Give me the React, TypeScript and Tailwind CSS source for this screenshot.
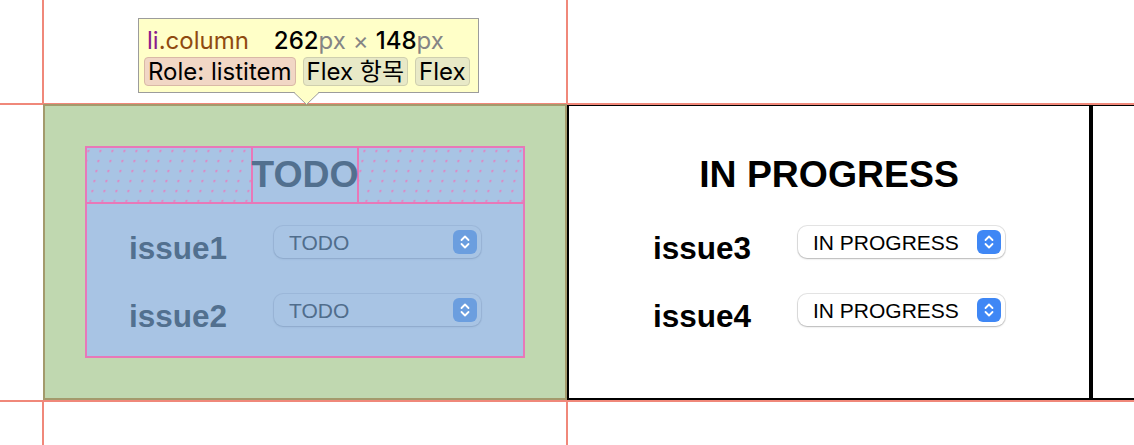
import React from "react";

interface ColumnProps {
  title: string;
  status: string;
  issues: string[];
  highlighted?: boolean;
}

// stepper button of a mac-style select
function Stepper({ bg }: { bg: string }) {
  return (
    <div className={`w-[24px] h-[24px] rounded-[6px] flex items-center justify-center ${bg}`}>
      <svg width="12" height="16" viewBox="0 0 12 16" fill="none" stroke="white" strokeWidth="1.8" strokeLinecap="round" strokeLinejoin="round">
        <path d="M2.5 6 L6 2.5 L9.5 6" />
        <path d="M2.5 10 L6 13.5 L9.5 10" />
      </svg>
    </div>
  );
}

function FakeSelect({ value, highlighted }: { value: string; highlighted?: boolean }) {
  return (
    <div
      className={`w-[207px] h-[32px] rounded-[9px] flex items-center justify-between pl-[15px] pr-[4px] ${
        highlighted
          ? "bg-[#a8c4e4] text-[#506d8c] shadow-[0_0_0_1px_rgba(80,110,150,0.12),0_1px_2px_rgba(60,90,130,0.18)]"
          : "bg-white text-black shadow-[0_0_0_1px_rgba(0,0,0,0.1),0_1px_2px_rgba(0,0,0,0.2)]"
      }`}
    >
      <span className="text-[21px] leading-none">{value}</span>
      <Stepper bg={highlighted ? "bg-[#6b9edf]" : "bg-[#3f87f5]"} />
    </div>
  );
}

function Column({ title, status, issues, highlighted }: ColumnProps) {
  return (
    <li
      className={`w-[524px] h-[296px] shrink-0 p-[40px] border-2 ${
        highlighted ? "relative z-10 bg-[#c0d8b0] border-[#a39a6c]" : "bg-white border-black"
      }`}
    >
      <div
        className={`h-full flex flex-col ${
          highlighted ? "bg-[#a8c4e4] shadow-[inset_0_0_0_2px_#e878b8]" : ""
        }`}
      >
        {/* Title */}
        <div
          className={`relative h-[58px] shrink-0 flex justify-center items-center ${
            highlighted ? "shadow-[inset_0_0_0_2px_#e878b8]" : ""
          }`}
        >
          {highlighted && (
            <svg className="absolute left-[2px] top-[2px]" width="436" height="54">
              <defs>
                <pattern id="free" width="12" height="10" patternUnits="userSpaceOnUse" patternTransform="skewX(-11.31)">
                  <rect x="1" y="2" width="2" height="2" fill="#e283c2" />
                </pattern>
              </defs>
              <rect width="436" height="54" fill="url(#free)" />
            </svg>
          )}
          <h3
            className={`relative h-full flex items-center text-[37.4px] font-bold leading-none ${
              highlighted ? "bg-[#a8c4e4] text-[#52708f] shadow-[inset_0_0_0_2px_#e878b8]" : "text-black"
            }`}
          >
            {title}
          </h3>
        </div>

        {/* Issues */}
        <ul className="pt-[4px]">
          {issues.map((issue) => (
            <li key={issue} className="h-[68px] flex justify-center items-center gap-[48px]">
              <h4
                className={`w-[97px] pt-[11px] text-[31.5px] font-bold leading-[36px] ${
                  highlighted ? "text-[#52708f]" : "text-black"
                }`}
              >
                {issue}
              </h4>
              <FakeSelect value={status} highlighted={highlighted} />
            </li>
          ))}
        </ul>
      </div>
    </li>
  );
}

export default function App() {
  return (
    <div className="relative w-[1134px] h-[445px] overflow-hidden bg-white font-['Liberation_Sans',Arial,sans-serif]">
      <ul className="flex pt-[104px] pl-[43px]">
        <Column title="TODO" status="TODO" issues={["issue1", "issue2"]} highlighted />
        <Column title="IN PROGRESS" status="IN PROGRESS" issues={["issue3", "issue4"]} />
        <li className="w-[524px] h-[296px] shrink-0 border-2 border-black bg-white" />
      </ul>

      {/* Inspector guides */}
      <div className="absolute left-0 top-[103px] w-full h-[2px] bg-[#f0887a] z-[5]" />
      <div className="absolute left-0 top-[400px] w-full h-[2px] bg-[#f0887a] z-[5]" />
      <div className="absolute left-[42px] top-0 w-[2px] h-[104px] bg-[#f0887a]" />
      <div className="absolute left-[42px] top-[400px] w-[2px] h-[45px] bg-[#f0887a]" />
      <div className="absolute left-[566px] top-0 w-[2px] h-[104px] bg-[#f0887a]" />
      <div className="absolute left-[566px] top-[400px] w-[2px] h-[45px] bg-[#f0887a]" />

      {/* Inspector tooltip */}
      <div className="absolute left-[138px] top-[18px] w-[341px] h-[75px] z-20 bg-[#ffffc8] border border-[#9c9c9c] px-[5px] pt-[6px] font-['Inter','Noto_Sans_CJK_KR',sans-serif] text-[24px] text-black">
        <div className="flex items-baseline h-[31px] pl-[3px] leading-[31px]">
          <span className="text-[#8a1b8c]">li</span>
          <span className="text-[#8f4a10]">.column</span>
          <span className="ml-[25px] font-medium">262</span>
          <span className="text-[#858585]">px</span>
          <span className="text-[#858585] mx-[7px]">×</span>
          <span className="font-medium">148</span>
          <span className="text-[#858585]">px</span>
        </div>
        <div className="flex gap-[7px] mt-[1px]">
          <span className="h-[29px] px-[3px] rounded-[4px] border border-[#d9b9a6] bg-[#f1d7c5] leading-[27px]">Role: listitem</span>
          <span className="h-[29px] px-[3px] rounded-[4px] border border-[#cfcfae] bg-[#e8e9c7] leading-[27px]">Flex 항목</span>
          <span className="h-[29px] px-[3px] rounded-[4px] border border-[#cfcfae] bg-[#e8e9c7] leading-[27px]">Flex</span>
        </div>
        <svg className="absolute left-[155px] top-[73px]" width="26" height="14" viewBox="0 0 26 14">
          <path d="M0 0.5 L12.5 12.5 L25 0.5" fill="#ffffc8" stroke="#9c9c9c" strokeWidth="1" />
          <rect x="1" y="0" width="23" height="1" fill="#ffffc8" />
        </svg>
      </div>
    </div>
  );
}
